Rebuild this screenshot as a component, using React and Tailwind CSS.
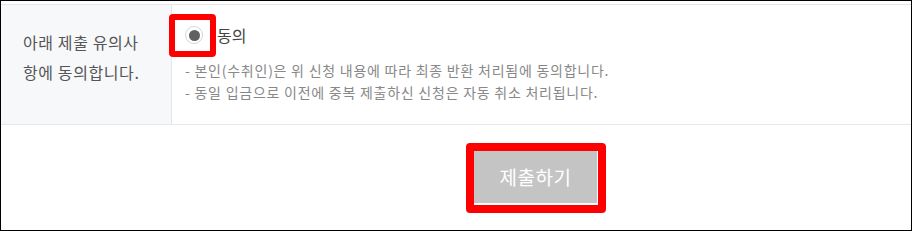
export default function App() {
  const font = { fontFamily: '"Noto Sans CJK KR", "Noto Sans", sans-serif' };
  return (
    <div
      className="relative w-[912px] h-[231px] border border-black bg-white pt-[3px] overflow-hidden"
      style={font}
    >
      <div className="flex border-t border-b border-[#e6e7ea] h-[121px]">
        <div className="w-[171px] shrink-0 bg-[#f7f8fa] border-r border-[#e6e7ea] pl-[22px] pt-[22px] text-[16px] leading-[30px] tracking-[0.6px] text-[#555]">
          아래 제출 유의사
          <br />
          항에 동의합니다.
        </div>
        <div className="flex-1 pl-[13px] pt-[20px]">
          <div className="flex items-center h-[20px]">
            <span className="w-[18px] h-[18px] rounded-full border border-[#d6d6d6] bg-white flex items-center justify-center">
              <span className="w-[11px] h-[11px] rounded-full bg-[#606060]" />
            </span>
            <span className="ml-[14px] text-[16px] text-[#444] leading-[20px]">동의</span>
          </div>
          <div className="mt-[14px] text-[14px] leading-[22px] tracking-[0.75px] text-[#888]">
            <div>- 본인(수취인)은 위 신청 내용에 따라 최종 반환 처리됨에 동의합니다.</div>
            <div>- 동일 입금으로 이전에 중복 제출하신 신청은 자동 취소 처리됩니다.</div>
          </div>
        </div>
      </div>
      <div className="pl-[473px] pt-[26px]">
        <button className="w-[123px] h-[52px] bg-[#c4c4c4] text-white text-[19px] tracking-[0.5px]">
          제출하기
        </button>
      </div>
      <div className="absolute left-[168px] top-[13px] w-[47px] h-[43px] border-[6px] border-[#ff0000] rounded-[4px]" />
      <div className="absolute left-[465px] top-[142px] w-[140px] h-[70px] border-[8px] border-[#ff0000] rounded-[4px]" />
    </div>
  );
}
